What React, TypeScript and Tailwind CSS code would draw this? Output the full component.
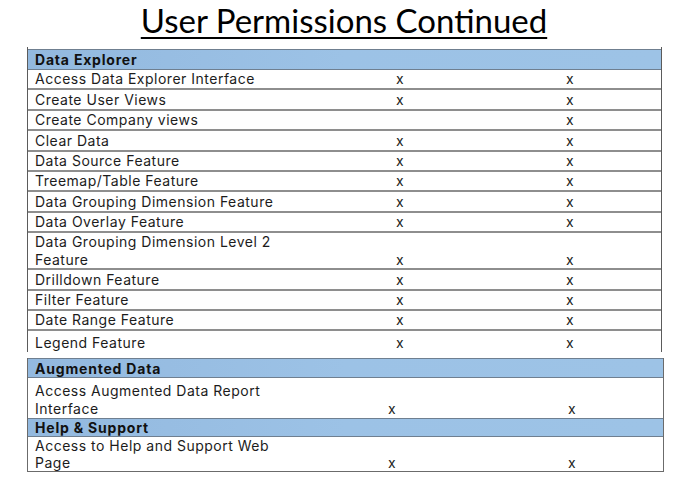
import React from 'react';

type Row = {
  label: string[];
  a: boolean;
  b: boolean;
  h: string;
  lh?: string;
};

const explorerRows: Row[] = [
  { label: ['Access Data Explorer Interface'], a: true, b: true, h: 'h-[20.4px]' },
  { label: ['Create User Views'], a: true, b: true, h: 'h-[20.4px]' },
  { label: ['Create Company views'], a: false, b: true, h: 'h-[20.4px]' },
  { label: ['Clear Data'], a: true, b: true, h: 'h-[20.4px]' },
  { label: ['Data Source Feature'], a: true, b: true, h: 'h-[20.4px]' },
  { label: ['Treemap/Table Feature'], a: true, b: true, h: 'h-[20.4px]' },
  { label: ['Data Grouping Dimension Feature'], a: true, b: true, h: 'h-[20.4px]' },
  { label: ['Data Overlay Feature'], a: true, b: true, h: 'h-[20.4px]' },
  { label: ['Data Grouping Dimension Level 2', 'Feature'], a: true, b: true, h: 'h-[37px]' },
  { label: ['Drilldown Feature'], a: true, b: true, h: 'h-[20.4px]' },
  { label: ['Filter Feature'], a: true, b: true, h: 'h-[20.4px]' },
  { label: ['Date Range Feature'], a: true, b: true, h: 'h-[20.4px]' },
  { label: ['Legend Feature'], a: true, b: true, h: 'h-[21px]' },
];

const SectionHeader = ({ title, h }: { title: string; h: string }) => (
  <div
    className={`${h} flex items-center border-y border-[#6f7f90] bg-gradient-to-r from-[#93b9df] via-[#9cc2e6] to-[#9dc3e6] pl-[7px] text-[14px] leading-[17px] font-bold tracking-[0.8px] text-[#111]`}
  >
    {title}
  </div>
);

const PermRow = ({ row, cols, last }: { row: Row; cols: string; last?: boolean }) => (
  <div
    className={`${row.h} grid ${cols} items-end ${last ? '' : 'border-b-2 border-[#8e8e8e]'} text-[14px] ${row.lh ?? 'leading-[18px]'} tracking-[0.5px] text-[#1c1c1c]`}
  >
    <div className="pl-[7px]">
      {row.label.map((line, i) => (
        <React.Fragment key={i}>
          {i > 0 && <br />}
          {line}
        </React.Fragment>
      ))}
    </div>
    <div className="text-center">{row.a ? 'x' : ''}</div>
    <div className="text-center">{row.b ? 'x' : ''}</div>
  </div>
);

export default function App() {
  const cols1 = 'grid-cols-[293px_158px_1fr]';
  const cols2 = 'grid-cols-[275px_178px_1fr]';

  return (
    <div className="h-[480px] w-[688px] bg-white font-['Inter',sans-serif]">
      <div className="flex h-[47px] justify-center">
        <h1 className="pt-[1px] font-['Lato',sans-serif] text-[33px] leading-[38px] text-black underline decoration-[2px] underline-offset-[4px]">
          User Permissions Continued
        </h1>
      </div>

      <div className="ml-[27px] w-[635px] border-x border-[#5b5b5b]">
        <div className="h-[2px]" />
        <SectionHeader title="Data Explorer" h="h-[21px]" />
        {explorerRows.map((row, i) => (
          <PermRow key={i} row={row} cols={cols1} last={i === explorerRows.length - 1} />
        ))}
      </div>

      <div className="ml-[27px] mt-[6px] w-[637px] border-x border-b border-[#6b6b6b]">
        <SectionHeader title="Augmented Data" h="h-[20px]" />
        <PermRow
          row={{ label: ['Access Augmented Data Report', 'Interface'], a: true, b: true, h: 'h-[40px]' }}
          cols={cols2}
          last
        />
        <SectionHeader title="Help & Support" h="h-[19px]" />
        <PermRow
          row={{ label: ['Access to Help and Support Web', 'Page'], a: true, b: true, h: 'h-[34px]', lh: 'leading-[17px]' }}
          cols={cols2}
          last
        />
      </div>
    </div>
  );
}
